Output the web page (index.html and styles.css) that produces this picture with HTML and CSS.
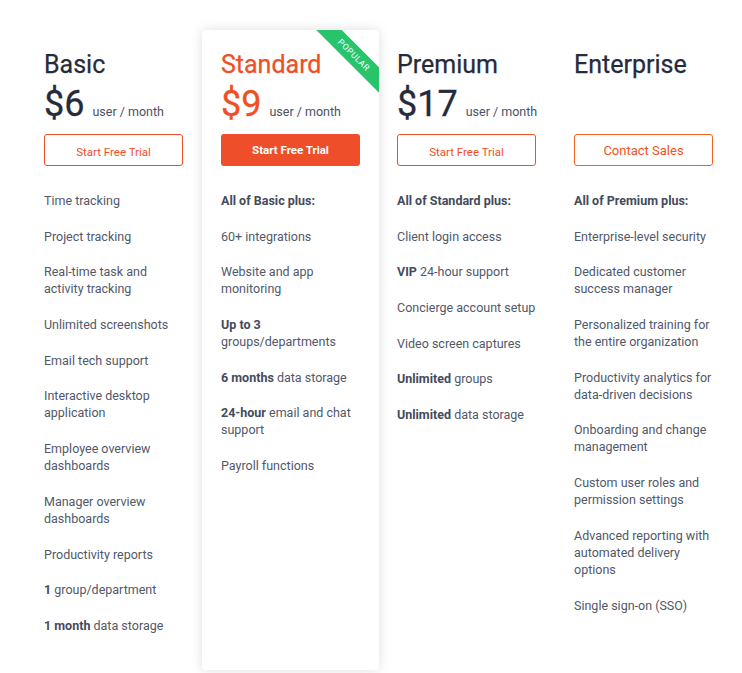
FILE: index.html
```html
<!DOCTYPE html>
<html>
<head>
<meta charset="utf-8">
<link rel="stylesheet" href="styles.css">
</head>
<body>
<div class="plans">
  <div class="plan">
    <h2 class="plan-name">Basic</h2>
    <div class="price"><span class="amount">$6</span><span class="unit">user / month</span></div>
    <a class="btn btn-outline btn-trial">Start Free Trial</a>
    <ul class="features">
      <li>Time tracking</li>
      <li>Project tracking</li>
      <li>Real-time task and activity tracking</li>
      <li>Unlimited screenshots</li>
      <li>Email tech support</li>
      <li>Interactive desktop application</li>
      <li>Employee overview dashboards</li>
      <li>Manager overview dashboards</li>
      <li>Productivity reports</li>
      <li><b>1</b> group/department</li>
      <li><b>1 month</b> data storage</li>
    </ul>
  </div>
  <div class="plan plan-featured">
    <div class="ribbon">POPULAR</div>
    <h2 class="plan-name accent">Standard</h2>
    <div class="price"><span class="amount accent">$9</span><span class="unit">user / month</span></div>
    <a class="btn btn-solid">Start Free Trial</a>
    <ul class="features">
      <li><b>All of Basic plus:</b></li>
      <li>60+ integrations</li>
      <li>Website and app monitoring</li>
      <li><b>Up to 3</b> groups/departments</li>
      <li><b>6 months</b> data storage</li>
      <li><b>24-hour</b> email and chat support</li>
      <li>Payroll functions</li>
    </ul>
  </div>
  <div class="plan plan-narrow">
    <h2 class="plan-name">Premium</h2>
    <div class="price"><span class="amount">$17</span><span class="unit">user / month</span></div>
    <a class="btn btn-outline btn-trial">Start Free Trial</a>
    <ul class="features">
      <li><b>All of Standard plus:</b></li>
      <li>Client login access</li>
      <li><b>VIP</b> 24-hour support</li>
      <li>Concierge account setup</li>
      <li>Video screen captures</li>
      <li><b>Unlimited</b> groups</li>
      <li><b>Unlimited</b> data storage</li>
    </ul>
  </div>
  <div class="plan">
    <h2 class="plan-name">Enterprise</h2>
    <div class="price"></div>
    <a class="btn btn-outline btn-contact">Contact Sales</a>
    <ul class="features">
      <li><b>All of Premium plus:</b></li>
      <li>Enterprise-level security</li>
      <li>Dedicated customer success manager</li>
      <li>Personalized training for the entire organization</li>
      <li>Productivity analytics for data-driven decisions</li>
      <li>Onboarding and change management</li>
      <li>Custom user roles and permission settings</li>
      <li>Advanced reporting with automated delivery options</li>
      <li>Single sign-on (SSO)</li>
    </ul>
  </div>
</div>
</body>
</html>
```

FILE: styles.css
```css
* { box-sizing: border-box; }
html, body { margin: 0; padding: 0; background: #fff; }
body {
  font-family: Roboto, "Liberation Sans", Arial, sans-serif;
  color: #262b3c;
  height: 673px;
  overflow: hidden;
}
.plans {
  display: grid;
  grid-template-columns: 177px 177px 176px 177px;
  padding: 30px 0 0 25px;
  align-items: stretch;
}
.plan {
  position: relative;
  padding: 20px 19px 17px 19px;
}
.plan-narrow {
  padding-left: 18px;
}
.plan-featured {
  background: #fff;
  border-radius: 4px;
  box-shadow: 0 0 12px rgba(0, 0, 0, 0.13);
  overflow: hidden;
}
.ribbon {
  position: absolute;
  left: 92px;
  top: 16px;
  width: 120px;
  height: 18px;
  line-height: 18px;
  background: #27c46b;
  color: #fff;
  font-size: 8.5px;
  letter-spacing: 0.5px;
  text-align: center;
  transform: rotate(45deg);
}
.plan-name {
  margin: 0;
  font-size: 25px;
  line-height: 30px;
  font-weight: 400;
  color: #262b3c;
  -webkit-text-stroke: 0.25px currentColor;
}
.accent { color: #ee4f27 !important; }
.price {
  margin-top: 4px;
  height: 40px;
  display: flex;
  align-items: baseline;
  white-space: nowrap;
}
.amount {
  font-size: 36px;
  line-height: 40px;
  font-weight: 400;
  color: #262b3c;
  -webkit-text-stroke: 0.3px currentColor;
}
.unit {
  margin-left: 8px;
  font-size: 12.5px;
  color: #4b5266;
}
.btn {
  display: flex;
  align-items: center;
  justify-content: center;
  margin-top: 10px;
  width: 139px;
  height: 32px;
  border-radius: 3px;
  font-size: 11.5px;
  text-decoration: none;
  color: #ee4f27;
  white-space: nowrap;
}
.btn-outline {
  border: 1px solid #ee4f27;
}
.btn-trial { padding-top: 3px; }
.btn-contact { font-size: 13px; color: #f0531f; border-color: #f0621f; }
.btn-solid {
  background: #ee4f2a;
  color: #fff;
  font-weight: 700;
}
.features {
  list-style: none;
  margin: 26px 0 0 0;
  padding: 0;
}
.features li {
  font-size: 12.5px;
  line-height: 17px;
  color: #51586a;
  margin-bottom: 18.7px;
}
.features b {
  font-weight: 700;
  color: #444b5d;
}
```
